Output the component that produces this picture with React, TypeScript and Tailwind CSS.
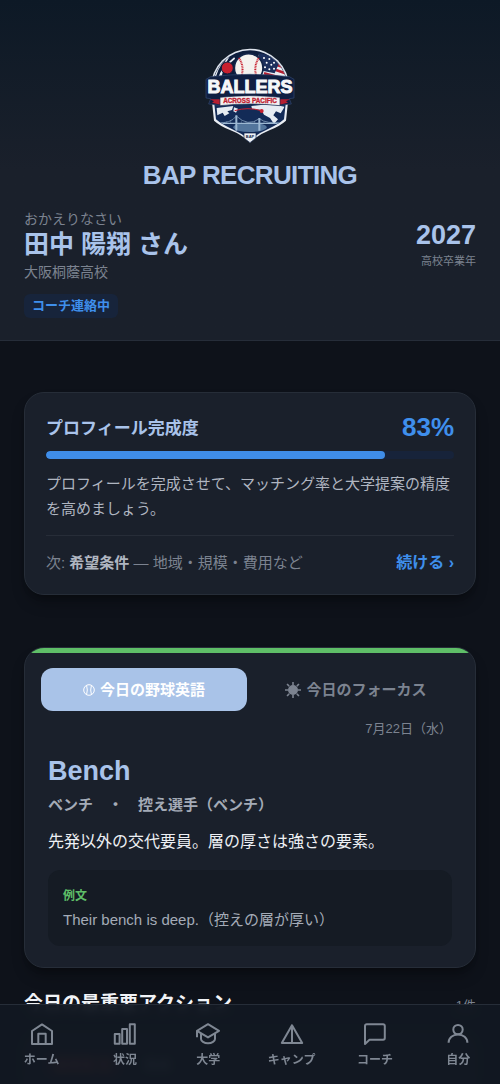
import { useState } from "react";
import type { ReactNode } from "react";

const NAV_ITEMS: { label: string; icon: ReactNode }[] = [
  {
    label: "ホーム",
    icon: (
      <>
        <path d="M2 22V9L12 2.4 22 9v13z" />
        <path d="M8.3 22V11.7h7.4V22" />
      </>
    ),
  },
  {
    label: "状況",
    icon: (
      <>
        <rect x="1.800" y="12" width="4.800" height="9.800" />
        <rect x="9.200" y="7" width="4.800" height="14.800" />
        <rect x="16.800" y="2.200" width="5" height="19.600" />
      </>
    ),
  },
  {
    label: "大学",
    icon: (
      <>
        <path d="M12 2.2 23 8.8l-11 6.6L1 8.8z" />
        <path d="M1 9v6.2" />
        <path d="M5 12v5c0 2 3 4.2 7 4.2s7-2.2 7-4.2v-5" />
      </>
    ),
  },
  {
    label: "キャンプ",
    icon: <path d="M12 3.2 1.8 21h20.4zV21" />,
  },
  {
    label: "コーチ",
    icon: <path d="M3.7 2.3h16.4a1.7 1.7 0 0 1 1.7 1.7v12a1.7 1.7 0 0 1-1.7 1.7H6.5L2 22V4a1.7 1.7 0 0 1 1.7-1.7z" />,
  },
  {
    label: "自分",
    icon: (
      <>
        <circle cx="12" cy="7.6" r="4.7" />
        <path d="M2.6 20.8c0-5 4.200-8.400 9.400-8.400s9.400 3.400 9.400 8.400" />
      </>
    ),
  },
];

function Logo() {
  return (
    <svg viewBox="36 24 288 288" className="h-24 w-24" role="img" aria-label="Ballers Across Pacific">
      <defs>
        <clipPath id="crest">
          <circle cx="180" cy="144" r="112" />
        </clipPath>
        <clipPath id="shield">
          <path d="M76 196Q180 180 284 196L280 238Q264 252 236 266Q204 280 180 300Q156 280 124 266Q96 252 80 238Z" />
        </clipPath>
      </defs>
      <circle cx="180" cy="144" r="118" fill="#dfe5ee" />
      <circle cx="180" cy="144" r="113" fill="#0c1c3c" />
      <g clipPath="url(#crest)">
        <path d="M206 44 250 50 306 96V136L206 112Z" fill="#e9edf3" />
        <path d="M222 100 304 122M240 84 304 106M252 72 300 88" stroke="#b51f31" strokeWidth="8" />
        <path d="M206 40 244 46 266 72 254 100 206 90Z" fill="#1c2f5c" />
        <g fill="#fff">
          <circle cx="222" cy="54" r="3" />
          <circle cx="238" cy="57" r="3" />
          <circle cx="252" cy="68" r="3" />
          <circle cx="230" cy="68" r="3" />
          <circle cx="244" cy="74" r="3" />
          <circle cx="225" cy="82" r="3" />
          <circle cx="238" cy="88" r="3" />
          <circle cx="252" cy="86" r="3" />
        </g>
        <path d="M76 108Q86 70 118 46Q98 78 92 112M86 116Q96 84 134 54" stroke="#e9edf3" strokeWidth="5" fill="none" />
      </g>
      <circle cx="112" cy="84" r="18" fill="#c8202f" stroke="#0c1c3c" strokeWidth="3" />
      <circle cx="176" cy="84" r="43" fill="#f4f2ef" stroke="#122448" strokeWidth="5" />
      <path d="M147 54Q166 84 151 116M206 54Q188 84 202 116" fill="none" stroke="#c8202f" strokeWidth="6" strokeDasharray="3 2" />
      <path d="M66 186Q180 172 294 186L288 242Q270 258 240 270Q204 284 180 308Q156 284 120 270Q90 258 72 242Z" fill="#e9edf3" />
      <path d="M73 192Q180 180 287 192L282 238Q264 254 236 266Q204 280 180 300Q156 280 124 266Q96 254 78 238Z" fill="#132b57" />
      <g clipPath="url(#shield)">
        <ellipse cx="180" cy="262" rx="50" ry="14" fill="#7ea6c9" opacity="0.6" />
        <path d="M80 204 130 198 126 210 112 214 118 220 104 228 98 218 82 226ZM132 202l12 4-6 12-8-4z" fill="#e6ecf3" />
        <path d="M184 198 240 192 284 200 272 220 258 214 250 226 264 238 252 252 240 234 222 224 214 210 186 206Z" fill="#e6ecf3" />
        <path d="M134 212Q174 200 214 212" fill="none" stroke="#c8202f" strokeWidth="3" />
        <circle cx="215" cy="213" r="6" fill="#c8202f" />
        <path d="M76 250H284" stroke="#9db8d2" strokeWidth="4" />
        <path d="M139 226V272M208 234V272" stroke="#9db8d2" strokeWidth="6" />
        <path d="M80 248Q122 252 139 228Q174 262 208 236Q228 252 280 248" fill="none" stroke="#9db8d2" strokeWidth="2" />
        <path d="M110 244v8M122 240v12M154 242v10M168 246v6M182 248v4M194 244v8M222 244v8" stroke="#9db8d2" strokeWidth="1" />
      </g>
      <path d="M162 279H198V294L180 308 162 294Z" fill="#eef2f6" stroke="#14264a" strokeWidth="2" />
      <text x="180" y="293" textAnchor="middle" className="font-bold" fontFamily="Liberation Sans, sans-serif" fontSize="12" fill="#14264a">
        BAP
      </text>
      <path
        d="M48 118 62 110Q180 96 298 110L312 118V174L298 176 304 192 268 196Q180 186 92 196L56 192 62 176 48 174Z"
        fill="#0f1f42"
        stroke="#34496f"
        strokeWidth="2"
      />
      <path d="M60 178H92V194L66 188 72 184ZM300 178H268V194L294 188 288 184Z" fill="#b51f31" />
      <text
        x="180"
        y="159"
        textAnchor="middle"
        className="font-bold"
        fontFamily="Liberation Sans, sans-serif"
        fontSize="54"
        fill="#f6f7f9"
        stroke="#f6f7f9"
        strokeWidth="3"
      >
        BALLERS
      </text>
      <path d="M90 172Q180 162 270 172V197Q180 187 90 197Z" fill="#f3f2f2" stroke="#14264a" strokeWidth="2" />
      <text
        x="180"
        y="189"
        textAnchor="middle"
        className="font-bold"
        fontFamily="Liberation Sans, sans-serif"
        fontSize="19"
        fill="#c11f32"
        stroke="#c11f32"
        strokeWidth="1"
      >
        ACROSS PACIFIC
      </text>
    </svg>
  );
}

function BaseballIcon() {
  return (
    <svg viewBox="0 0 12 12" className="h-3 w-3" fill="none" stroke="currentColor" aria-hidden="true">
      <circle cx="6" cy="6" r="5.3" />
      <path d="M3.6 1.500Q5 6 3.600 10.500M8.400 1.500Q7 6 8.400 10.500" />
    </svg>
  );
}

function SunIcon() {
  return (
    <svg viewBox="0 0 15 15" className="h-4 w-4" aria-hidden="true">
      <circle cx="7.5" cy="7.5" r="4.7" fill="currentColor" />
      <path
        d="M7.5 0v3M7.5 12v3M0 7.5h3M12 7.5h3M1.900 1.900l2 2M11.100 11.100l2 2M1.900 13.100l2-2M11.100 3.900l2-2"
        stroke="currentColor"
        strokeWidth="1.5"
      />
    </svg>
  );
}

function Header() {
  return (
    <header className="border-b border-[#262d39] bg-linear-to-b from-[#0d1926] to-[#1a202b] to-50% px-6 pt-12 pb-[22px]">
      <div className="flex flex-col items-center gap-[13px]">
        <Logo />
        <h1 className="text-[26px] leading-9 font-bold tracking-tight text-[#a9c3ea]">BAP RECRUITING</h1>
      </div>
      <div className="mt-4 flex items-start justify-between">
        <div>
          <p className="text-sm leading-5 text-[#7c8390]">おかえりなさい</p>
          <h2 className="text-[25px] leading-[30px] font-bold text-[#a9c3ea]">田中 陽翔 さん</h2>
          <p className="text-sm leading-[26px] text-[#7c8390]">大阪桐蔭高校</p>
          <span className="mt-[9px] inline-block rounded-md bg-[#17243b] px-2 text-[13px] leading-6 font-bold text-[#3f8fec]">
            コーチ連絡中
          </span>
        </div>
        <div className="pt-2.5 text-right">
          <p className="text-[27px] leading-8 font-bold text-[#a9c3ea]">2027</p>
          <p className="text-[11px] leading-5 text-[#7c8390]">高校卒業年</p>
        </div>
      </div>
    </header>
  );
}

function ProfileCard({ percent }: { percent: number }) {
  return (
    <section className="rounded-[20px] border border-[#262d38] bg-[#1a202b] px-[21px] pt-4 pb-[19px] shadow-lg shadow-black/30">
      <div className="flex items-center justify-between">
        <h2 className="pt-1 text-[17px] leading-8 font-bold text-[#a9c3ea]">プロフィール完成度</h2>
        <span className="text-[26px] leading-9 font-bold text-[#3f8fec]">{percent}%</span>
      </div>
      <div className="mt-1.5 h-2 overflow-hidden rounded-full bg-[#17233a]">
        <div className="h-full rounded-full bg-[#3f8de8]" style={{ width: `${percent}%` }} />
      </div>
      <p className="mt-3 text-[15px] leading-[25px] text-[#b0b6c1]">
        プロフィールを完成させて、マッチング率と大学提案の精度を高めましょう。
      </p>
      <div className="mt-3.5 flex items-center justify-between border-t border-[#272d38] pt-[15px]">
        <p className="text-[15px] leading-6 text-[#7c8390]">
          次: <strong className="font-bold text-[#b0b6c1]">希望条件</strong> — 地域・規模・費用など
        </p>
        <a href="#profile" className="text-base leading-6 font-bold text-[#3f8fec]">
          続ける ›
        </a>
      </div>
    </section>
  );
}

function TodayCard() {
  const [tab, setTab] = useState<"english" | "focus">("english");
  const tabClass = (active: boolean) =>
    `flex h-[43px] items-center justify-center gap-[5px] rounded-xl text-[15px] leading-6 font-bold ${
      active ? "bg-[#a9c3e8] text-white" : "text-[#7c8390]"
    }`;

  return (
    <section className="mt-[52px] overflow-hidden rounded-[20px] border border-[#262d38] bg-[#1a202b] shadow-lg shadow-black/30">
      <div className="h-[5px] bg-[#5fbf68]" />
      <div className="grid grid-cols-2 gap-1.5 px-4 pt-[15px]">
        <button type="button" className={tabClass(tab === "english")} onClick={() => setTab("english")}>
          <BaseballIcon />
          今日の野球英語
        </button>
        <button type="button" className={tabClass(tab === "focus")} onClick={() => setTab("focus")}>
          <SunIcon />
          今日のフォーカス
        </button>
      </div>
      <div className="px-[23px] pt-1.5 pb-[21px]">
        <p className="text-right text-[13px] leading-6 text-[#7c8390]">7月22日（水）</p>
        <h2 className="mt-3 text-[27px] leading-9 font-bold text-[#a9c3ea]">Bench</h2>
        <p className="mt-1 text-[15px] leading-6 font-bold text-[#a4abb7]">ベンチ　・　控え選手（ベンチ）</p>
        <p className="mt-[11px] text-base leading-7 text-[#eef0f4]">先発以外の交代要員。層の厚さは強さの要素。</p>
        <div className="mt-3.5 rounded-xl bg-[#151b24] px-[15px] py-3.5">
          <p className="text-xs leading-6 font-bold text-[#5fbf68]">例文</p>
          <p className="text-[15px] leading-6 text-[#a4abb7]">Their bench is deep.（控えの層が厚い）</p>
        </div>
      </div>
    </section>
  );
}

function Actions() {
  return (
    <section className="mt-5 pb-24">
      <div className="flex items-center justify-between">
        <h2 className="text-[19px] leading-8 font-bold text-[#f1f3f6]">今日の最重要アクション</h2>
        <span className="pt-1 text-[13px] leading-6 text-[#7c8390]">1件</span>
      </div>
      <div className="mt-3 flex gap-4 rounded-[20px] border border-[#262d38] bg-[#1a202b] p-5 text-[13px] leading-6 font-bold">
        <span className="rounded-md bg-[#4a1f28] px-2.5 text-[#ef5350]">重要度 高</span>
        <span className="rounded-md px-2 text-[#7c8390]">動画</span>
      </div>
    </section>
  );
}

function BottomNav() {
  return (
    <nav className="fixed inset-x-0 bottom-0 grid h-20 grid-cols-6 border-t border-[#262d38] bg-[#121822]/95 backdrop-blur-xs">
      {NAV_ITEMS.map((item) => (
        <a key={item.label} href="#" className="flex flex-col items-center gap-1 pt-[17px] text-[#7f8793]">
          <svg
            viewBox="0 0 24 24"
            className="h-6 w-6"
            fill="none"
            stroke="currentColor"
            strokeWidth="2"
            strokeLinejoin="round"
            aria-hidden="true"
          >
            {item.icon}
          </svg>
          <span className="text-xs leading-5 font-bold">{item.label}</span>
        </a>
      ))}
    </nav>
  );
}

export default function App() {
  return (
    <div
      lang="ja"
      className="h-screen overflow-y-auto bg-[#0e121a] font-['Liberation_Sans','Noto_Sans_CJK_JP',sans-serif] [scrollbar-width:none]"
    >
      <Header />
      <main className="px-6 pt-[51px]">
        <ProfileCard percent={83} />
        <TodayCard />
        <Actions />
      </main>
      <BottomNav />
    </div>
  );
}
